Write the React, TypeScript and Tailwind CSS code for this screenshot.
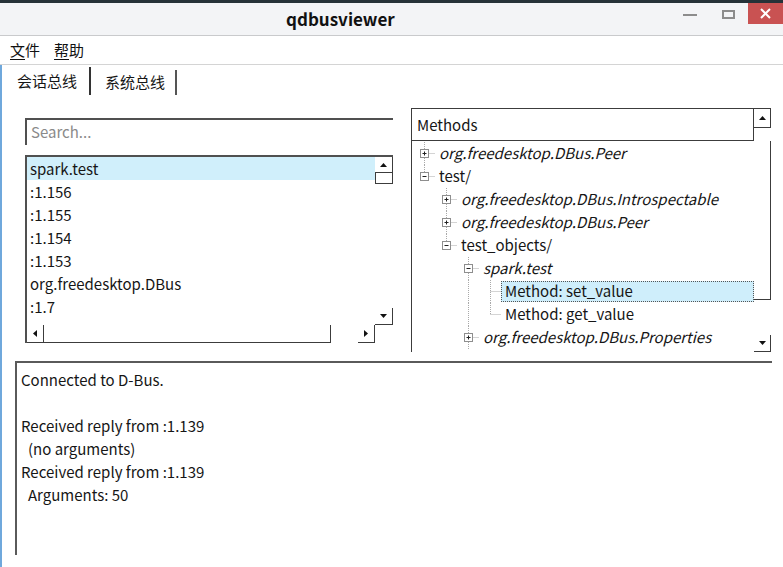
import React from "react";

type Dir = "up" | "down" | "left" | "right";
type Cell = "none" | "line" | "tee" | "end";

type TreeRow = {
  cells: Cell[];
  box?: "+" | "-";
  text: string;
  italic?: boolean;
  selected?: boolean;
};

const services = [
  "spark.test",
  ":1.156",
  ":1.155",
  ":1.154",
  ":1.153",
  "org.freedesktop.DBus",
  ":1.7",
  "org.freedesktop.Notifications",
];

const tree: TreeRow[] = [
  { cells: ["tee"], box: "+", text: "org.freedesktop.DBus.Peer", italic: true },
  { cells: ["end"], box: "-", text: "test/" },
  { cells: ["none", "tee"], box: "+", text: "org.freedesktop.DBus.Introspectable", italic: true },
  { cells: ["none", "tee"], box: "+", text: "org.freedesktop.DBus.Peer", italic: true },
  { cells: ["none", "end"], box: "-", text: "test_objects/" },
  { cells: ["none", "none", "tee"], box: "-", text: "spark.test", italic: true },
  { cells: ["none", "none", "line", "tee"], text: "Method: set_value", selected: true },
  { cells: ["none", "none", "line", "end"], text: "Method: get_value" },
  { cells: ["none", "none", "tee"], box: "+", text: "org.freedesktop.DBus.Properties", italic: true },
];

function Arrow({ dir }: { dir: Dir }) {
  const vertical = dir === "up" || dir === "down";
  const points = {
    up: "0,4 3.5,0 7,4",
    down: "0,0 7,0 3.5,4",
    left: "4,0 4,7 0,3.5",
    right: "0,0 0,7 4,3.5",
  }[dir];
  return (
    <svg width={vertical ? 7 : 4} height={vertical ? 4 : 7} viewBox={vertical ? "0 0 7 4" : "0 0 4 7"}>
      <polygon points={points} fill="#111" />
    </svg>
  );
}

function Branch({ kind, box }: { kind: Cell; box?: "+" | "-" }) {
  const dot = { stroke: "#a9a9a9", strokeDasharray: "1 1" };
  return (
    <svg width="22" height="23" className="shrink-0">
      {(kind === "line" || kind === "tee") && <line x1="11.5" y1="0" x2="11.5" y2="23" {...dot} />}
      {kind === "end" && <line x1="11.5" y1="0" x2="11.5" y2="11.5" {...dot} />}
      {(kind === "tee" || kind === "end") && <line x1="11.5" y1="11.5" x2="22" y2="11.5" {...dot} />}
      {box && (
        <>
          <rect x="7.5" y="7.5" width="8" height="8" fill="#fff" stroke="#8e8e8e" />
          <line x1="9.5" y1="11.5" x2="13.5" y2="11.5" stroke="#222" />
          {box === "+" && <line x1="11.5" y1="9.5" x2="11.5" y2="13.5" stroke="#222" />}
        </>
      )}
    </svg>
  );
}

function TitleBar() {
  return (
    <div className="h-[33px] bg-[#f3f4f6] border-b border-[#c9cacc] flex items-start">
      <div className="ml-[286px] mt-[5px] font-bold text-[17px] leading-[22px] text-[#111]">qdbusviewer</div>
      <div className="ml-auto flex items-start">
        <div className="w-[14px] h-[2px] bg-[#8c8c8c] mt-[11px]" />
        <div className="ml-[25px] mt-[7px] w-[13px] h-[9px] border-2 border-[#8c8c8c]" />
        <div className="ml-[13px] w-[35px] h-[21px] bg-[#c95252] flex items-center justify-center">
          <svg width="11" height="11" viewBox="0 0 11 11">
            <path d="M1 1L10 10M10 1L1 10" stroke="#fff" strokeWidth="2" />
          </svg>
        </div>
      </div>
    </div>
  );
}

function MenuBar() {
  return (
    <div className="h-[29px] border-b border-[#d4d4d4] flex items-center pl-[10px] pt-[1px] gap-[14px] text-[15px] text-[#111]">
      <span>
        <span className="underline underline-offset-[3px]">文</span>件
      </span>
      <span>
        <span className="underline underline-offset-[3px]">帮</span>助
      </span>
    </div>
  );
}

function ServiceList() {
  return (
    <div className="mt-[10px] h-[188px] border-t-2 border-l-2 border-[#505050] flex flex-col">
      <div className="flex h-[168px]">
        <div className="w-[348px] h-[165px] overflow-hidden">
          {services.map((s, i) => (
            <div key={s} className={`h-[23px] pl-[3px] pt-[1px] flex items-center ${i === 0 ? "bg-[#d0effb]" : ""}`}>
              {s}
            </div>
          ))}
        </div>
        <div className="w-[18px] flex flex-col">
          <div className="h-[16px] border-b border-r border-[#3c3c3c] flex items-center justify-center">
            <Arrow dir="up" />
          </div>
          <div className="h-[11px] border-l border-b border-r border-[#3c3c3c]" />
          <div className="flex-1" />
          <div className="h-[17px] border-b border-r border-[#3c3c3c] flex items-center justify-center">
            <Arrow dir="down" />
          </div>
        </div>
      </div>
      <div className="flex h-[18px]">
        <div className="w-[16px] border-b border-[#3c3c3c] flex items-center justify-center">
          <Arrow dir="left" />
        </div>
        <div className="w-[288px] border-l border-b border-r border-[#3c3c3c]" />
        <div className="w-[27px]" />
        <div className="w-[17px] border-r border-b border-[#3c3c3c] flex items-center justify-center">
          <Arrow dir="right" />
        </div>
        <div className="w-[18px]" />
      </div>
    </div>
  );
}

function MethodTree() {
  return (
    <div className="ml-[18px] mt-[13px] w-[360px] flex flex-col">
      <div className="flex h-[33px]">
        <div className="flex-1 border border-[#3c3c3c] pl-[5px] pt-[2px] flex items-center">Methods</div>
        <div className="w-[17px] h-[20px] border-t border-r border-b border-[#3c3c3c] flex items-center justify-center">
          <Arrow dir="up" />
        </div>
      </div>
      <div className="flex h-[211px]">
        <div className="flex-1 border-l border-[#3c3c3c] pl-[1px] pt-[1px] overflow-hidden">
          {tree.map((r, i) => (
            <div key={i} className="h-[23px] flex items-center whitespace-nowrap">
              {r.cells.map((c, j) => (
                <Branch key={j} kind={c} box={j === r.cells.length - 1 ? r.box : undefined} />
              ))}
              {r.selected ? (
                <div className="flex-1 h-[21px] bg-[#cfeefb] border border-dotted border-[#555] pl-[3px] flex items-center">
                  {r.text}
                </div>
              ) : (
                <span className={`ml-[4px] ${r.italic ? "italic" : ""}`}>{r.text}</span>
              )}
            </div>
          ))}
        </div>
        <div className="w-[17px] flex flex-col">
          <div className="h-[159px] border-r border-b border-[#3c3c3c]" />
          <div className="flex-1" />
          <div className="h-[17px] border-r border-b border-[#3c3c3c] flex items-center justify-center">
            <Arrow dir="down" />
          </div>
        </div>
      </div>
    </div>
  );
}

function Log() {
  return (
    <div className="ml-[13px] mt-[9px] w-[757px] h-[194px] border-t-2 border-l-2 border-[#5a5a5a] pt-[5px] pl-[4px] leading-[23px]">
      <div>Connected to D-Bus.</div>
      <div className="h-[23px]" />
      <div>Received reply from :1.139</div>
      <div className="pl-[7px]">(no arguments)</div>
      <div>Received reply from :1.139</div>
      <div className="pl-[7px]">Arguments: 50</div>
    </div>
  );
}

export default function App() {
  return (
    <div className="w-[783px] h-[567px] bg-white overflow-hidden flex flex-col text-[15px] text-[#161616] font-['Noto_Sans_CJK_SC','Noto_Sans',sans-serif]">
      <div className="h-[3px] bg-[#263238]" />
      <TitleBar />
      <MenuBar />
      <div className="flex-1 flex flex-col border-l-2 border-[#6fa8dc]">
        <div className="h-[30px] flex items-end">
          <div className="pl-[15px] pr-[12px] h-[28px] flex items-center border-r-2 border-[#333]">会话总线</div>
          <div className="pl-[14px] pr-[10px] h-[25px] flex items-center border-r-2 border-[#555]">系统总线</div>
        </div>
        <div className="flex items-start">
          <div className="ml-[23px] mt-[23px] w-[368px] flex flex-col">
            <div className="h-[27px] border-t-2 border-l-2 border-[#505050] pl-[4px] flex items-center text-[#8a8a8a]">
              Search...
            </div>
            <ServiceList />
          </div>
          <MethodTree />
        </div>
        <Log />
      </div>
    </div>
  );
}
